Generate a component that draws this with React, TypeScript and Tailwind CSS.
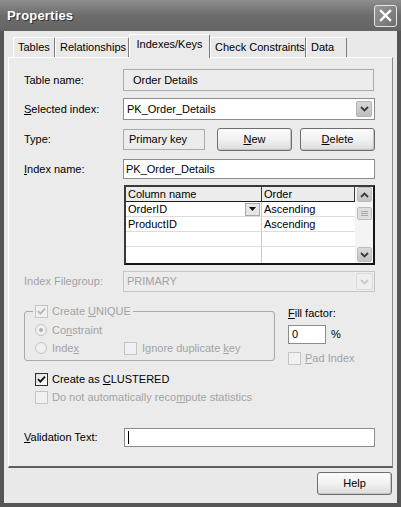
import React from "react";

const DIS = "text-[#a3a3a3]";

function Chevron({ dir = "down", color = "#3a3a3a" }: { dir?: "down" | "up"; color?: string }) {
  return (
    <svg width="9" height="6" viewBox="0 0 9 6">
      {dir === "down" ? (
        <path d="M1 1 L4.5 4.5 L8 1" stroke={color} strokeWidth="1.8" fill="none" />
      ) : (
        <path d="M1 5 L4.5 1.5 L8 5" stroke={color} strokeWidth="1.8" fill="none" />
      )}
    </svg>
  );
}

function DropBtn({ disabled = false }: { disabled?: boolean }) {
  return (
    <div
      className={
        disabled
          ? "w-[17px] h-[17px] mr-[1px] rounded-[2px] border border-[#dadada] bg-[#eeeeee] flex items-center justify-center"
          : "w-[16px] h-[16px] mr-[2px] rounded-[2px] border border-[#b4b4b4] bg-gradient-to-b from-[#d8d8d8] to-[#bdbdbd] flex items-center justify-center"
      }
    >
      <Chevron color={disabled ? "#c8c8c8" : "#3c3c3c"} />
    </div>
  );
}

function Check({ checked = false, disabled = false }: { checked?: boolean; disabled?: boolean }) {
  return (
    <span
      className={
        disabled
          ? "w-[13px] h-[13px] shrink-0 border border-[#c4c4c4] bg-[#f0f0f0] flex items-center justify-center"
          : "w-[13px] h-[13px] shrink-0 border border-[#2e2e2e] bg-gradient-to-br from-[#dcdcdc] to-white flex items-center justify-center"
      }
    >
      {checked && (
        <svg width="9" height="9" viewBox="0 0 9 9">
          <path d="M1 4.2 L3.4 6.6 L8 1.6" stroke={disabled ? "#b8b8b8" : "#151515"} strokeWidth="1.9" fill="none" />
        </svg>
      )}
    </span>
  );
}

function Radio({ selected = false }: { selected?: boolean }) {
  return (
    <span className="w-[12px] h-[12px] shrink-0 rounded-full border border-[#c4c4c4] bg-[#f0f0f0] flex items-center justify-center">
      {selected && <span className="w-[4px] h-[4px] rounded-full bg-[#b0b0b0]" />}
    </span>
  );
}

function Button({ children, w = "w-[75px]" }: { children: React.ReactNode; w?: string }) {
  return (
    <div
      className={`${w} h-[23px] rounded-[3px] border border-[#6e6e6e] bg-gradient-to-b from-[#fcfcfc] via-[#f1f1f1] to-[#dcdcdc] shadow-[inset_-1px_-1px_0_#c4c4c4] flex items-center justify-center text-black`}
    >
      {children}
    </div>
  );
}

function Tab({ children, w, active = false }: { children: React.ReactNode; w: string; active?: boolean }) {
  return active ? (
    <div
      className={`${w} h-[24px] -mb-[1px] bg-[#ebebeb] border-t border-l border-white border-r border-r-[#7c7c7c] rounded-t-[2px] flex items-start pt-[4px] justify-center text-black`}
    >
      {children}
    </div>
  ) : (
    <div
      className={`${w} h-[20px] border-t border-l border-white border-r border-r-[#7c7c7c] rounded-t-[2px] flex items-center pl-[4px] text-black`}
    >
      {children}
    </div>
  );
}

export default function App() {
  return (
    <div className="w-[401px] h-[507px] bg-[#555555] flex flex-col font-['Liberation_Sans',Arial,sans-serif] text-[11px] leading-none text-black select-none">
      {/* Title bar */}
      <div className="h-[31px] shrink-0 bg-gradient-to-b from-[#8e8e8e] via-[#6c6c6c] to-[#646464] flex items-center justify-between pl-[7px] pr-[4px]">
        <span className="text-white font-bold text-[13px] [text-shadow:1px_1px_0_#333333] tracking-[0.2px]">Properties</span>
        <div className="w-[23px] h-[22px] rounded-[3px] border border-[#e6e6e6] bg-gradient-to-br from-[#9a9a9a] to-[#6e6e6e] flex items-center justify-center">
          <svg width="13" height="13" viewBox="0 0 13 13">
            <path d="M2 2 L11 11 M11 2 L2 11" stroke="white" strokeWidth="2.4" strokeLinecap="square" />
          </svg>
        </div>
      </div>

      {/* Body */}
      <div className="flex-1 mx-[4px] mb-[4px] bg-[#e9e9e9] flex flex-col">
        {/* Tabs */}
        <div className="h-[26px] shrink-0 flex items-end pl-[9px] relative z-10">
          <Tab w="w-[42px]">Tables</Tab>
          <Tab w="w-[74px]">Relationships</Tab>
          <Tab w="w-[81px]" active>
            Indexes/Keys
          </Tab>
          <Tab w="w-[96px]">Check Constraints</Tab>
          <Tab w="w-[41px]">Data</Tab>
        </div>

        {/* Panel */}
        <div className="mx-[4px] h-[411px] shrink-0 bg-[#ebebeb] border-t border-l border-white border-r border-r-[#8a8a8a] border-b-2 border-b-[#5e5e5e] flex flex-col pl-[15px] pr-[17px]">
          {/* Table name */}
          <div className="mt-[11px] h-[22px] flex items-center">
            <span className="w-[99px]">Table name:</span>
            <div className="w-[251px] h-full border border-[#ababab] bg-[#ececec] flex items-center pl-[9px]">Order Details</div>
          </div>

          {/* Selected index */}
          <div className="mt-[7px] h-[22px] flex items-center">
            <span className="w-[99px]">
              <u>S</u>elected index:
            </span>
            <div className="w-[252px] h-full border border-[#8c8c8c] bg-white flex items-center justify-between pl-[3px]">
              <span>PK_Order_Details</span>
              <DropBtn />
            </div>
          </div>

          {/* Type */}
          <div className="mt-[8px] h-[23px] flex items-center">
            <span className="w-[99px]">Type:</span>
            <div className="w-[82px] h-[21px] border border-[#ababab] bg-[#ececec] flex items-center pl-[5px]">Primary key</div>
            <div className="ml-[12px]">
              <Button>
                <span>
                  <u>N</u>ew
                </span>
              </Button>
            </div>
            <div className="ml-[8px]">
              <Button>
                <span>
                  <u>D</u>elete
                </span>
              </Button>
            </div>
          </div>

          {/* Index name */}
          <div className="mt-[8px] h-[20px] flex items-center">
            <span className="w-[99px]">
              <u>I</u>ndex name:
            </span>
            <div className="w-[252px] h-full border border-[#8c8c8c] bg-white flex items-center pl-[2px]">PK_Order_Details</div>
          </div>

          {/* Grid */}
          <div className="mt-[6px] ml-[100px] w-[251px] h-[80px] border-2 border-t-[#3a3a3a] border-l-[#3a3a3a] border-r-[#151515] border-b-[#151515] bg-white flex">
            <div className="w-[229px] flex flex-col">
              <div className="h-[15px] flex border-b border-[#1a1a1a]">
                <div className="w-[136px] bg-[#ececec] border-r border-[#3a3a3a] flex items-center pl-[2px]">Column name</div>
                <div className="flex-1 bg-[#ececec] border-r border-[#3a3a3a] flex items-center pl-[2px]">Order</div>
              </div>
              <div className="h-[15px] flex border-b border-[#dcdcdc]">
                <div className="w-[136px] border-r border-[#c8c8c8] flex items-center justify-between pl-[2px] pr-[1px]">
                  <span>OrderID</span>
                  <div className="w-[15px] h-[13px] border border-[#a8a8a8] bg-[#e6e6e6] flex items-center justify-center">
                    <svg width="7" height="4" viewBox="0 0 7 4">
                      <path d="M0 0 L7 0 L3.5 4 Z" fill="#111" />
                    </svg>
                  </div>
                </div>
                <div className="flex-1 flex items-center pl-[2px]">Ascending</div>
              </div>
              <div className="h-[15px] flex border-b border-[#dcdcdc]">
                <div className="w-[136px] border-r border-[#c8c8c8] flex items-center pl-[2px]">ProductID</div>
                <div className="flex-1 flex items-center pl-[2px]">Ascending</div>
              </div>
              <div className="h-[15px] flex border-b border-[#dcdcdc]">
                <div className="w-[136px] border-r border-[#c8c8c8]" />
                <div className="flex-1" />
              </div>
              <div className="flex-1 flex">
                <div className="w-[136px] border-r border-[#c8c8c8]" />
                <div className="flex-1" />
              </div>
            </div>
            {/* scrollbar */}
            <div className="flex-1 bg-[#f4f4f4] flex flex-col pl-[2px] pr-[1px] pt-[0px]">
              <div className="h-[15px] rounded-[2px] border border-[#bdbdbd] bg-gradient-to-b from-[#dadada] to-[#c2c2c2] flex items-center justify-center">
                <Chevron dir="up" />
              </div>
              <div className="mt-[5px] h-[13px] rounded-[2px] border border-[#bdbdbd] bg-[#dedede] flex flex-col items-center justify-center gap-[1px]">
                <span className="w-[7px] h-[1px] bg-[#a8a8a8]" />
                <span className="w-[7px] h-[1px] bg-[#a8a8a8]" />
                <span className="w-[7px] h-[1px] bg-[#a8a8a8]" />
              </div>
              <div className="flex-1" />
              <div className="h-[15px] mb-[1px] rounded-[2px] border border-[#bdbdbd] bg-gradient-to-b from-[#dadada] to-[#c2c2c2] flex items-center justify-center">
                <Chevron />
              </div>
            </div>
          </div>

          {/* Index Filegroup */}
          <div className="mt-[6px] h-[21px] flex items-center">
            <span className={`w-[99px] ${DIS}`}>Index Filegroup:</span>
            <div className="w-[252px] h-full border border-[#c6c6c6] bg-[#ececec] flex items-center justify-between pl-[3px]">
              <span className={DIS}>PRIMARY</span>
              <DropBtn disabled />
            </div>
          </div>

          {/* Group + fill factor */}
          <div className="mt-[13px] h-[58px] flex items-start">
            <fieldset className="w-[251px] border border-[#a9a9a9] rounded-[3px] flex flex-col pb-[5px]">
              <legend className="ml-[8px] px-[2px]">
                <span className={`flex items-center gap-[4px] ${DIS}`}>
                  <Check checked disabled />
                  <span>
                    Create <u>U</u>NIQUE
                  </span>
                </span>
              </legend>
              <div className={`mt-[5px] h-[14px] pl-[10px] flex items-center gap-[5px] ${DIS}`}>
                <Radio selected />
                <span>
                  Co<u>n</u>straint
                </span>
              </div>
              <div className={`mt-[4px] h-[14px] pl-[10px] flex items-center ${DIS}`}>
                <div className="w-[89px] flex items-center gap-[5px]">
                  <Radio />
                  <span>
                    Inde<u>x</u>
                  </span>
                </div>
                <div className="flex items-center gap-[5px]">
                  <Check disabled />
                  <span>
                    Ignore duplicate <u>k</u>ey
                  </span>
                </div>
              </div>
            </fieldset>
            <div className="ml-[13px] flex flex-col">
              <span className="mt-[1px] h-[14px] flex items-center">
                <span>
                  <u>F</u>ill factor:
                </span>
              </span>
              <div className="mt-[5px] flex items-center">
                <div className="w-[38px] h-[19px] border border-[#8c8c8c] bg-white flex items-center pl-[3px]">0</div>
                <span className="ml-[5px]">%</span>
              </div>
              <div className={`mt-[8px] flex items-center gap-[4px] ${DIS}`}>
                <Check disabled />
                <span>
                  <u>P</u>ad Index
                </span>
              </div>
            </div>
          </div>

          {/* Clustered */}
          <div className="mt-[10px] ml-[11px] h-[13px] flex items-center gap-[4px]">
            <Check checked />
            <span>
              Create as <u>C</u>LUSTERED
            </span>
          </div>
          <div className={`mt-[5px] ml-[11px] h-[13px] flex items-center gap-[4px] ${DIS}`}>
            <Check disabled />
            <span>
              Do not automatically reco<u>m</u>pute statistics
            </span>
          </div>

          {/* Validation text */}
          <div className="mt-[24px] h-[19px] flex items-center">
            <span className="w-[100px]">
              <u>V</u>alidation Text:
            </span>
            <div className="w-[251px] h-full border border-[#8c8c8c] bg-white flex items-center pl-[3px]">
              <span className="w-[1px] h-[13px] bg-black" />
            </div>
          </div>
        </div>

        {/* Help */}
        <div className="flex justify-end pr-[5px] pt-[4px]">
          <Button>Help</Button>
        </div>
      </div>
    </div>
  );
}
